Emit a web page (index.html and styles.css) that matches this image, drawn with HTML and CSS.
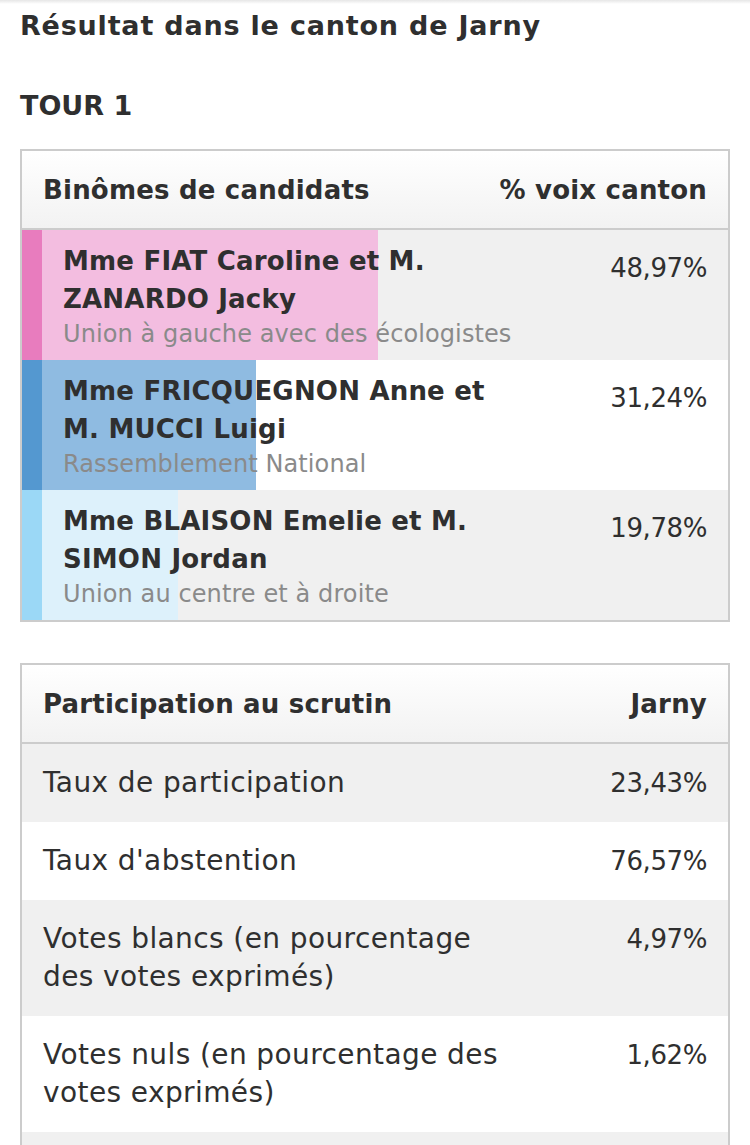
FILE: index.html
```html
<!DOCTYPE html>
<html lang="fr">
<head>
<meta charset="utf-8">
<link rel="stylesheet" href="styles.css">
</head>
<body>
<div class="topshade"></div>
<main class="page">
  <h1 class="title">Résultat dans le canton de Jarny</h1>
  <h2 class="tour">TOUR 1</h2>

  <section class="table">
    <div class="row head">
      <div class="cell label">Binômes de candidats</div>
      <div class="cell value">% voix canton</div>
    </div>
    <div class="row cand gray">
      <div class="strip pink-strip"></div>
      <div class="bar pink-bar" style="width: calc((100% - 20px) * 0.4897)"></div>
      <div class="cell label cand-label">
        <div class="name">Mme FIAT Caroline et M. ZANARDO Jacky</div>
        <div class="party">Union à gauche avec des écologistes</div>
      </div>
      <div class="cell value cand-value">48,97%</div>
    </div>
    <div class="row cand">
      <div class="strip blue-strip"></div>
      <div class="bar blue-bar" style="width: calc((100% - 20px) * 0.3124)"></div>
      <div class="cell label cand-label">
        <div class="name">Mme FRICQUEGNON Anne et M. MUCCI Luigi</div>
        <div class="party">Rassemblement National</div>
      </div>
      <div class="cell value cand-value">31,24%</div>
    </div>
    <div class="row cand gray">
      <div class="strip sky-strip"></div>
      <div class="bar sky-bar" style="width: calc((100% - 20px) * 0.1978)"></div>
      <div class="cell label cand-label">
        <div class="name">Mme BLAISON Emelie et M. SIMON Jordan</div>
        <div class="party">Union au centre et à droite</div>
      </div>
      <div class="cell value cand-value">19,78%</div>
    </div>
  </section>

  <section class="table second">
    <div class="row head">
      <div class="cell label">Participation au scrutin</div>
      <div class="cell value">Jarny</div>
    </div>
    <div class="row stat gray">
      <div class="cell label">Taux de participation</div>
      <div class="cell value">23,43%</div>
    </div>
    <div class="row stat">
      <div class="cell label">Taux d'abstention</div>
      <div class="cell value">76,57%</div>
    </div>
    <div class="row stat gray">
      <div class="cell label">Votes blancs (en pourcentage des votes exprimés)</div>
      <div class="cell value">4,97%</div>
    </div>
    <div class="row stat">
      <div class="cell label">Votes nuls (en pourcentage des votes exprimés)</div>
      <div class="cell value">1,62%</div>
    </div>
    <div class="row filler gray"></div>
  </section>
</main>
</body>
</html>
```
FILE: styles.css
```css
html, body {
  margin: 0;
  padding: 0;
  background: #ffffff;
}
body {
  font-family: "DejaVu Sans", "Open Sans", sans-serif;
  color: #2f2f2f;
  overflow: hidden;
}
.topshade {
  height: 4px;
  background: linear-gradient(#e6e6e6, #ffffff);
}
.page {
  padding: 0 20px;
}
.title {
  margin: 4px 0 0;
  font-size: 27px;
  line-height: 36px;
  font-weight: 700;
  letter-spacing: 0.8px;
}
.tour {
  margin: 44px 0 0;
  font-size: 27px;
  line-height: 36px;
  font-weight: 700;
  letter-spacing: 0;
}
.table {
  margin-top: 25px;
  border: 2px solid #cccccc;
}
.table.second {
  margin-top: 41px;
}
.row {
  display: grid;
  grid-template-columns: 515px 1fr;
  position: relative;
  background: #ffffff;
}
.row.gray {
  background: #f0f0f0;
}
.row.head {
  grid-template-columns: 1fr auto;
  height: 77px;
  align-items: center;
  background: linear-gradient(#ffffff, #f2f2f2);
  border-bottom: 2px solid #cccccc;
  font-weight: 700;
}
.row.head .value {
  white-space: nowrap;
}
.cell {
  font-size: 28px;
  line-height: 38px;
  letter-spacing: 0.4px;
  position: relative;
  z-index: 1;
}
.cell.value {
  font-size: 26px;
  letter-spacing: -0.4px;
}
.head .cell,
.head .cell.value {
  font-size: 26px;
  letter-spacing: 0.2px;
}
.label {
  padding-left: 21px;
  padding-right: 21px;
}
.value {
  text-align: right;
  padding-right: 21px;
}
.row.stat {
  padding: 20px 0;
}
.row.filler {
  height: 60px;
}
.row.cand {
  height: 130px;
  box-sizing: border-box;
}
.cand-label {
  font-size: 26px;
  padding: 12px 21px 0 41px;
}
.cand-value {
  padding-top: 19px;
}
.name {
  font-weight: 700;
  letter-spacing: 0.2px;
}
.party {
  font-size: 24px;
  line-height: 32px;
  color: #8a8a8a;
  letter-spacing: 0.1px;
}
.strip {
  position: absolute;
  left: 0;
  top: 0;
  bottom: 0;
  width: 20px;
}
.bar {
  position: absolute;
  left: 20px;
  top: 0;
  bottom: 0;
}
.pink-strip { background: #e87cbe; }
.pink-bar { background: #f3bde0; }
.blue-strip { background: #5498d0; }
.blue-bar { background: #8fbbe1; }
.sky-strip { background: #9bd8f6; }
.sky-bar { background: #ddf1fb; }
```
